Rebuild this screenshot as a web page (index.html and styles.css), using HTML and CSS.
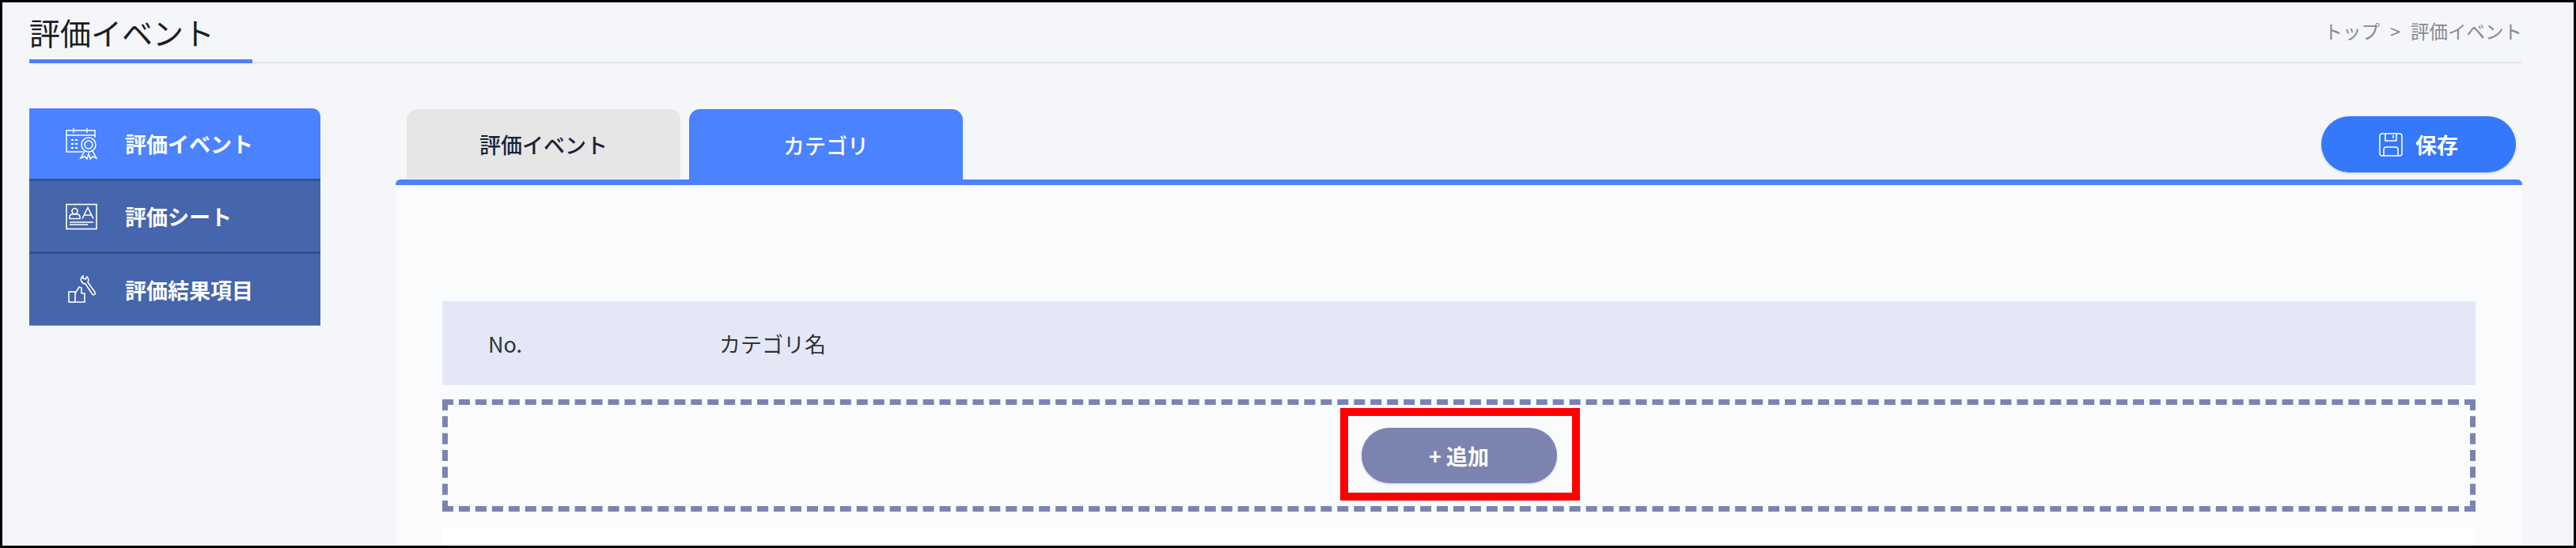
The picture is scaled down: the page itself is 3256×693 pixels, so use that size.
FILE: index.html
```html
<!DOCTYPE html>
<html lang="ja">

<head>
    <meta charset="UTF-8">
    <title>評価イベント</title>
    <link rel="stylesheet" href="styles.css">
</head>

<body>
    <div class="frame">
        <div class="header">
            <h1 class="title">評価イベント</h1>
            <div class="crumb">トップ<span class="crumb-sep">&gt;</span>評価イベント</div>
        </div>

        <div class="main">
            <div class="side">
                <div class="side-item active">
                    <svg class="side-icon" viewBox="0 0 40 40" fill="none" stroke="#fff" stroke-width="1.5">
                        <path d="M22 30H1V3H37V12" />
                        <path d="M1 9H37M10 0V6M27 0V6" />
                        <path d="M7 15H10M12 15H15M7 20H10M12 20H15M7 25H10M12 25H15" stroke-width="2.2" />
                        <circle cx="29" cy="21" r="9" />
                        <circle cx="29" cy="21" r="5" />
                        <path d="M24 29L19 38L24 36L27 39L29 32L31 39L34 36L39 38L34 29" />
                    </svg>
                    <span>評価イベント</span>
                </div>
                <div class="side-item">
                    <svg class="side-icon" viewBox="0 0 40 33" fill="none" stroke="#fff" stroke-width="1.6">
                        <rect x="1" y="1" width="38" height="31" />
                        <circle cx="11.5" cy="9.5" r="3.5" />
                        <path d="M5 19V17Q5 13.5 8.5 13.5H14.5Q18 13.5 18 17V19Z" />
                        <path d="M21 19L28 5L35 19M23.5 14.5H32.5" />
                        <path d="M5 23.5H35M5 26.5H28" />
                    </svg>
                    <span>評価シート</span>
                </div>
                <div class="side-item">
                    <svg class="side-icon" viewBox="0 0 40 40" fill="none" stroke="#fff" stroke-width="1.6">
                        <rect x="4" y="23" width="8" height="13" />
                        <path d="M12 25L17 17L20 18L20 25H24V36H12" />
                        <path d="M22 3Q18 6 20 10Q22 13 25 13L33 25Q35 28 37 26Q38 24 36 22L28 11Q30 7 27 4L25 7L22 6Z" />
                    </svg>
                    <span>評価結果項目</span>
                </div>
            </div>

            <div class="content">
                <div class="tabbar">
                    <div class="tabs">
                        <div class="tab">評価イベント</div>
                        <div class="tab on">カテゴリ</div>
                    </div>
                    <button class="save">
                        <svg class="save-icon" viewBox="0 0 30 30" fill="none" stroke="#fff" stroke-width="1.6">
                            <rect x="1" y="1" width="28" height="28" rx="3" />
                            <path d="M8 1V10H22V1M18 3V7" />
                            <path d="M6 29V21Q6 18 9 18H21Q24 18 24 21V29" />
                        </svg>
                        保存
                    </button>
                </div>
                <div class="panel">
                    <div class="list-head">
                        <div class="col-no">No.</div>
                        <div>カテゴリ名</div>
                    </div>
                    <div class="add-box">
                        <div class="add-wrap">
                            <button class="add">+ 追加</button>
                            <div class="mark"></div>
                        </div>
                    </div>
                    <div class="blank"></div>
                </div>
            </div>
        </div>
    </div>
</body>

</html>
```
FILE: styles.css
```css
* {
    margin: 0;
    padding: 0;
    box-sizing: border-box;
}
body {
    font-family: "Noto Sans CJK JP", "Noto Sans", sans-serif;
    background-color: #f4f6fa;
}
.frame {
    height: 693px;
    border: 3px solid #000;
    padding: 0 65px 0 34px;
    display: flex;
    flex-direction: column;
    overflow: hidden;
}
.header {
    height: 77px;
    border-bottom: 2px solid #e2e6ef;
    display: flex;
    justify-content: space-between;
}
.title {
    width: 282px;
    height: 77px;
    border-bottom: 5px solid #4a82ff;
    font-size: 39px;
    font-weight: 400;
    line-height: 74px;
    color: #1c1c1c;
}
.crumb {
    font-size: 23.5px;
    line-height: 72px;
    color: #8a8a8a;
}
.crumb-sep {
    margin: 0 13px;
}
.main {
    flex: 1;
    display: flex;
    gap: 95px;
    padding-top: 57px;
    min-height: 0;
}
.side {
    width: 368px;
    height: 275px;
    border-radius: 0 10px 0 0;
    overflow: hidden;
    flex-shrink: 0;
}
.side-item {
    height: 92px;
    padding-left: 46px;
    display: flex;
    align-items: center;
    gap: 35px;
    background-color: #4565ad;
    border-bottom: 3px solid #34508f;
    color: #fff;
    font-size: 27px;
    font-weight: 700;
}
.side-item:last-child {
    height: 91px;
    border-bottom: 1px solid #6f8bd0;
}
.side-item.active {
    background-color: #4a82ff;
}
.side-icon {
    width: 40px;
    height: 40px;
    flex-shrink: 0;
}
.content {
    flex: 1;
    display: flex;
    flex-direction: column;
    min-width: 0;
}
.tabbar {
    height: 90px;
    display: flex;
    justify-content: space-between;
    padding: 0 8px 0 14px;
}
.tabs {
    display: flex;
    gap: 11px;
    padding-top: 1px;
}
.tab {
    width: 346px;
    height: 88px;
    border-radius: 14px 14px 0 0;
    background-color: #e6e6e6;
    color: #1a2438;
    font-size: 27px;
    font-weight: 500;
    display: flex;
    align-items: center;
    justify-content: center;
}
.tab.on {
    height: 96px;
    background-color: #4a82ff;
    color: #fff;
    padding-bottom: 6px;
}
.save {
    width: 246px;
    height: 71px;
    margin-top: 10px;
    border: none;
    border-radius: 36px;
    background-color: #3578fa;
    color: #fff;
    font-family: inherit;
    font-size: 27px;
    font-weight: 700;
    display: flex;
    align-items: center;
    justify-content: center;
    gap: 16px;
    box-shadow: 0 1px 3px rgba(0, 0, 0, 0.2);
}
.save-icon {
    width: 30px;
    height: 30px;
}
.panel {
    flex: 1;
    border-top: 7px solid #4a82ff;
    border-radius: 6px 6px 0 0;
    background-color: #fafbfd;
    padding: 147px 59px 0 59px;
    display: flex;
    flex-direction: column;
    min-height: 0;
}
.list-head {
    height: 106px;
    background-color: #e4e8f6;
    display: flex;
    align-items: center;
    padding-left: 58px;
    font-size: 27px;
    color: #333;
}
.col-no {
    width: 292px;
}
.add-box {
    height: 142px;
    margin-top: 18px;
    border: 7px dashed #7b84b0;
    display: flex;
    align-items: center;
    justify-content: center;
}
.add-wrap {
    position: relative;
}
.add {
    display: block;
    width: 247px;
    height: 70px;
    border: none;
    border-radius: 35px;
    background-color: #7b84b0;
    color: #fff;
    font-family: inherit;
    font-size: 27px;
    font-weight: 700;
    box-shadow: 0 1px 3px rgba(0, 0, 0, 0.2);
}
.mark {
    position: absolute;
    top: -25px;
    left: -27px;
    right: -29px;
    bottom: -22px;
    border: 10px solid #f00;
}
.blank {
    flex: 1;
    margin-top: 20px;
    background-color: #fff;
}
```
